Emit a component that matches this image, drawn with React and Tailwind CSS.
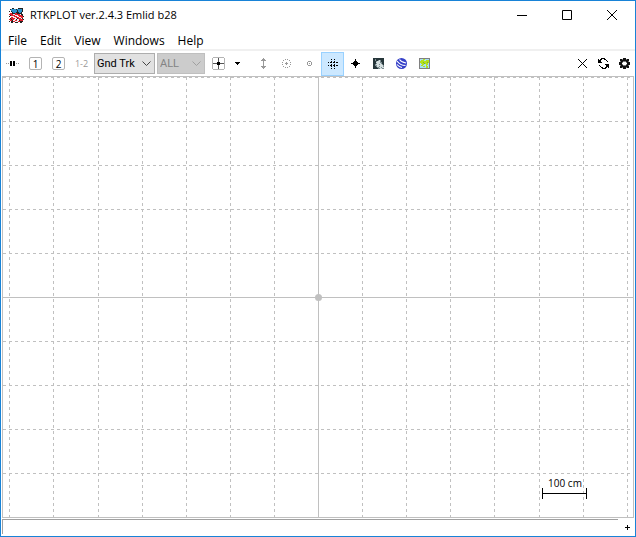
import React from "react";

const UI = "font-['Open_Sans','Noto_Sans',sans-serif]";

function Pixels({ rows, colors, className = "" }) {
  const w = Math.max(...rows.map((r) => r.length));
  return (
    <svg width={w} height={rows.length} viewBox={`0 0 ${w} ${rows.length}`} shapeRendering="crispEdges" className={`shrink-0 ${className}`} aria-hidden="true">
      {rows.flatMap((row, y) =>
        [...row].map((c, x) => (colors[c] ? <rect key={`${x}-${y}`} x={x} y={y} width="1" height="1" fill={colors[c]} /> : null))
      )}
    </svg>
  );
}

const APP = [
  "...kk....kkkkk.",
  ".kbbbbbkbbbbbk.",
  "..bbbbbbkbbbbk.",
  "k.kbbbbbkbbbbk.",
  "...kbbbkkkbbk..",
  ".rrkkkrrkkkkk..",
  "rrrrwwrrrrrwkk.",
  ".krrrrwwwrrrrk.",
  "k.wwwrrrwwrrrrk",
  "..rrwwwrrrwwrr.",
  ".krrrrwwkrrrwk.",
  "rrkrrwwkwwrrrrk",
  ".rrkwwrrwwkrrr.",
  "k.kkrrwwwrrkkk.",
  "..kk..kkk..kk..",
];

const CONNECT = ["....kk.kk....", "....kk.kk....", "g.g.kk.kk.g.g", "....kk.kk....", "....kk.kk...."];

const CENTER = [
  ".ggggggggggg.",
  "g.....d.....g",
  "g.....d.....g",
  "g.....d.....g",
  "g.....d.....g",
  "g....kkk....g",
  "gddddkkkddddg",
  "g....kkk....g",
  "g.....d.....g",
  "g.....d.....g",
  "g.....d.....g",
  "g.....d.....g",
  ".ggggggggggg.",
];

const UPDOWN = ["..g..", ".ggg.", "ggggg", "..g..", "..g..", "..g..", "..g..", "..g..", "ggggg", ".ggg.", "..g.."];

const TARGET = [
  "...g.g...",
  ".g.....g.",
  ".........",
  "g...g...g",
  "...ggg...",
  "g...g...g",
  ".........",
  ".g.....g.",
  "...g.g...",
];

const DOT = [".ggg.", "g...g", "g.g.g", "g...g", ".ggg."];

const GRID_DOTS = [
  "...k..k...",
  "..........",
  "...k..k...",
  "k.kk.kk.kk",
  "..........",
  "...k..k...",
  "k.kk.kk.kk",
  "...k..k...",
  "..........",
  "...k..k...",
];

const TRACK = [
  "....k....",
  "....k....",
  "...kkk...",
  "..kkkkk..",
  "kkkkkkkkk",
  "..kkkkk..",
  "...kkk...",
  "....k....",
  "....k....",
];

const SKY = [
  "nnnnnnnnnnn",
  "nnannnnnnnn",
  "nnannawannn",
  "nnnawwwannn",
  "nnnwwwwaann",
  "nnnawwwwann",
  "nnawwwawwan",
  "nnaawwwwwwa",
  "nnnawwawwwa",
  "nnnnaawwaww",
  "nnnnnaawwaa",
];

const MAP = [
  "ggggggggggg",
  "gcccyyccccg",
  "gcyyyccyyyg",
  "gyyyyyyyyyg",
  "gyyyvyyyvyg",
  "gcyyyvyyycg",
  "gccyyccyycg",
  "gcyycccyccg",
  "gcccyycyycg",
  "gccccccyycg",
  "ggggggggggg",
];

const REFRESH = [
  "...kkkk....",
  "k.kk..kk...",
  "kkk.....k..",
  "kkk......k.",
  "kkkk.......",
  "...........",
  ".......kkkk",
  ".k......kkk",
  "..k.....kkk",
  "...kk..kk.k",
  "....kkkk...",
];

const GEAR = [
  "....kkk....",
  ".kkgkkkgkk.",
  ".kkkkkkkkk.",
  ".gkkgggkkg.",
  "kkkg...gkkk",
  "kkk.....kkk",
  "kkkg...gkkk",
  ".gkkgggkkg.",
  ".kkkkkkkkk.",
  ".kkgkkkgkk.",
  "....kkk....",
];

function Tool({ label, className = "w-[23px]", children }) {
  return (
    <button type="button" aria-label={label} className={`flex h-6 shrink-0 items-center justify-center ${className}`}>
      {children}
    </button>
  );
}

function Combo({ label, value, disabled, width }) {
  return (
    <div className={`relative h-[21px] shrink-0 ${width}`}>
      <select
        aria-label={label}
        disabled={disabled}
        defaultValue={value}
        className={`block h-full w-full appearance-none border pl-[2px] font-['Roboto','Liberation_Sans',sans-serif] text-[11px] leading-[19px] opacity-100 ${
          disabled ? "border-[#bfbfbf] bg-[#cccccc] text-[#838383]" : "border-[#adadad] bg-[#e1e1e1] text-black"
        }`}
      >
        <option>{value}</option>
      </select>
      <svg width="9" height="6" viewBox="0 0 9 6" className="pointer-events-none absolute top-2 right-1" aria-hidden="true">
        <path d="M0.5 0.5 4.5 4.5 8.5 0.5" fill="none" stroke={disabled ? "#a0a0a0" : "#444"} />
      </svg>
    </div>
  );
}

function Digit({ children }) {
  return (
    <span className="flex h-[13px] w-[13px] items-center justify-center rounded-[2px] border border-[#b4b4b4] text-[10px] leading-none font-medium">
      {children}
    </span>
  );
}

const STEP = 44.1;

function Plot() {
  const columns = [-7, -6, -5, -4, -3, -2, -1, 1, 2, 3, 4, 5, 6, 7].map((k) => Math.round(315 + k * STEP) + 0.5);
  const rows = [-5, -4, -3, -2, -1, 1, 2, 3, 4].map((k) => 220.5 + k * 44);
  return (
    <svg viewBox="0 0 630 440" className="block h-auto w-full" role="img" aria-label="Ground track plot">
      <g stroke="#c0c0c0" strokeDasharray="3 3" shapeRendering="crispEdges">
        {columns.map((x) => (
          <line key={x} x1={x} x2={x} y1="0" y2="440" />
        ))}
        {rows.map((y) => (
          <line key={y} x1="0" x2="630" y1={y} y2={y} />
        ))}
      </g>
      <path d="M315.5 0V440M0 220.5H630" stroke="#c0c0c0" shapeRendering="crispEdges" />
      <circle cx="315.5" cy="220.5" r="3.5" fill="#c0c0c0" />
      <path d="M539.5 411V422M583.5 411V422M539.5 416.5H583.5" stroke="#000" shapeRendering="crispEdges" />
      <text x="562" y="410" textAnchor="middle" className="font-['Open_Sans','Noto_Sans',sans-serif] text-[10px]">
        100 cm
      </text>
    </svg>
  );
}

export default function App() {
  return (
    <main className={`flex min-h-screen w-full flex-col border border-[#1883d7] bg-white text-[11px] text-black ${UI}`}>
      <header className="flex h-[29px] items-center pl-2">
        <Pixels rows={APP} colors={{ k: "#222", b: "#2a93cc", r: "#e0202c", w: "#f4eeee" }} />
        <h1 className="ml-[6px]">RTKPLOT ver.2.4.3 Emlid b28</h1>
        <div className="ml-auto flex pr-px pb-px">
          <button type="button" aria-label="Minimize" className="flex h-7 w-[45px] items-center justify-center">
            <svg width="10" height="10" viewBox="0 0 10 10" aria-hidden="true"><path d="M0 5.5H10" stroke="#000" /></svg>
          </button>
          <button type="button" aria-label="Maximize" className="flex h-7 w-[45px] items-center justify-center">
            <svg width="10" height="10" viewBox="0 0 10 10" aria-hidden="true"><path d="M.5 .5H9.5V9.5H.5Z" fill="none" stroke="#000" /></svg>
          </button>
          <button type="button" aria-label="Close window" className="flex h-7 w-[45px] items-center justify-center">
            <svg width="10" height="10" viewBox="0 0 10 10" aria-hidden="true"><path d="M0 0 10 10M10 0 0 10" stroke="#000" /></svg>
          </button>
        </div>
      </header>

      <nav className="flex h-[19px] items-center gap-[13px] pt-[2px] pl-[7px] text-xs">
        {["File", "Edit", "View", "Windows", "Help"].map((m) => (
          <button key={m} type="button">{m}</button>
        ))}
      </nav>

      <div className="flex h-[27px] items-center border-t-2 border-[#f0f0f0]">
        <Tool label="Connect"><Pixels rows={CONNECT} colors={{ k: "#000", g: "#999" }} /></Tool>
        <Tool label="Solution 1"><Digit>1</Digit></Tool>
        <Tool label="Solution 2"><Digit>2</Digit></Tool>
        <Tool label="Solution 1-2"><span className="text-[9px] leading-none text-[#999]">1-2</span></Tool>
        <Combo label="Plot type" value="Gnd Trk" width="ml-px w-[61px]" />
        <Combo label="Quality" value="ALL" disabled width="ml-[2px] w-12" />
        <Tool label="Center" className="ml-[2px] w-[23px]"><Pixels rows={CENTER} colors={{ k: "#000", d: "#555", g: "#b4b4b4" }} /></Tool>
        <Tool label="Center options" className="w-[15px]">
          <Pixels rows={["kkkkk", ".kkk.", "..k.."]} colors={{ k: "#000" }} />
        </Tool>
        <Tool label="Fit vertical" className="ml-[7px] w-[23px]"><Pixels rows={UPDOWN} colors={{ g: "#999" }} /></Tool>
        <Tool label="Fit circle"><Pixels rows={TARGET} colors={{ g: "#999" }} /></Tool>
        <Tool label="Show point"><Pixels rows={DOT} colors={{ g: "#999" }} /></Tool>
        <Tool label="Show grid" className="w-[23px] border border-[#99d1ff] bg-[#cce8ff]"><Pixels rows={GRID_DOTS} colors={{ k: "#000" }} /></Tool>
        <Tool label="Show track"><Pixels rows={TRACK} colors={{ k: "#000" }} /></Tool>
        <Tool label="Show image"><Pixels rows={SKY} colors={{ n: "#26363a", a: "#7c8c90", w: "#d5dfe0" }} /></Tool>
        <Tool label="Google Earth">
          <svg width="11" height="11" viewBox="0 0 11 11" aria-hidden="true">
            <circle cx="5.5" cy="5.5" r="5.5" fill="#3540c8" />
            <path d="M3.5 1.5Q5.5 4.5 10 5M1 3Q4 7.5 9.5 7.5M1 6.5Q3 9 6 9.5" fill="none" stroke="#fff" strokeWidth="1.1" />
          </svg>
        </Tool>
        <Tool label="Google Map"><Pixels rows={MAP} colors={{ g: "#808080", c: "#a8e0f4", y: "#b4e01c", v: "#78b820" }} /></Tool>
        <div className="ml-auto flex">
          <Tool label="Clear" className="w-[21px]">
            <svg width="9" height="9" viewBox="0 0 9 9" aria-hidden="true"><path d="M0 0 9 9M9 0 0 9" stroke="#000" /></svg>
          </Tool>
          <Tool label="Reload" className="w-[21px]"><Pixels rows={REFRESH} colors={{ k: "#000" }} /></Tool>
          <Tool label="Options" className="w-[21px]"><Pixels rows={GEAR} colors={{ k: "#111", g: "#777" }} /></Tool>
        </div>
      </div>

      <section className="mx-px border border-[#c0c0c0]">
        <Plot />
      </section>

      <footer className="mt-px flex flex-1 pb-[2px] pl-px">
        <div role="status" className="flex-1 border-t border-l border-[#a0a0a0]" />
        <button type="button" aria-label="Resize" className="flex w-[17px] items-center justify-center pt-[2px] pl-px">
          <Pixels rows={["..k..", "..k..", "kkkkk", "..k..", "..k.."]} colors={{ k: "#000" }} />
        </button>
      </footer>
    </main>
  );
}
